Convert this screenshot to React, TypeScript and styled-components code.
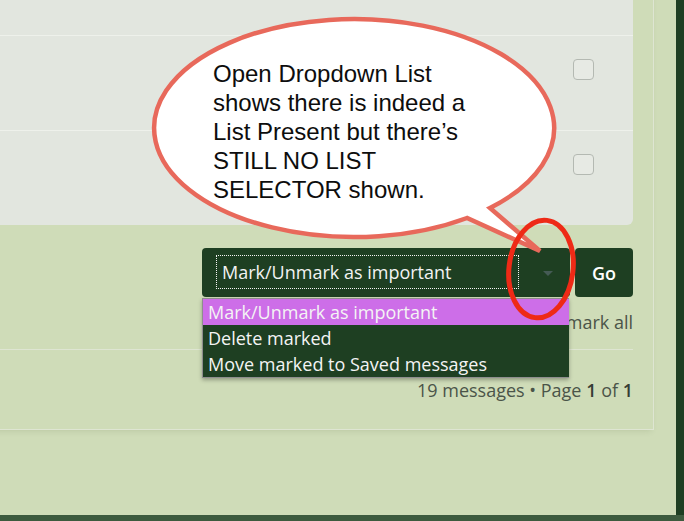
import React from 'react';
import styled, { createGlobalStyle } from 'styled-components';

const color = {
  page: '#cfdcb8',
  strip: '#1e3e22',
  bottomStrip: '#3d5b3e',
  list: '#e2e6df',
  listLine: '#eef1eb',
  panelLine: '#dee5d2',
  dark: '#1e3f22',
  purple: '#cd6ee8',
  text: '#4b5449',
  strong: '#363d35',
  coral: '#e8695b',
  red: '#ee2a16',
};

const actions = ['Mark/Unmark as important', 'Delete marked', 'Move marked to Saved messages'];

const App = () => {
  return (
    <Page>
      <GlobalStyle />
      <Main>
        <Panel>
          <ListBox>
            <Row />
            <Row>
              <Checkbox />
            </Row>
            <Row>
              <Checkbox />
            </Row>
          </ListBox>

          <ActionRow>
            <SelectBox>
              <FocusRing>{actions[0]}</FocusRing>
              <Caret />
              <Dropdown>
                {actions.map((action, index) => (
                  <Option key={action} $active={index === 0}>
                    {action}
                  </Option>
                ))}
              </Dropdown>
            </SelectBox>
            <GoButton>Go</GoButton>
          </ActionRow>

          <MarkRow>Mark all • Unmark all</MarkRow>
          <Divider />
          <Pagination>
            19 messages • Page <strong>1</strong> of <strong>1</strong>
          </Pagination>
        </Panel>
      </Main>
      <SideStrip />
      <BottomStrip />

      <Annotation viewBox="0 0 684 521">
        <path
          d="M490 208 A200 109 0 1 0 467 218 L540 251 Z"
          fill="#ffffff"
          stroke={color.coral}
          strokeWidth="4.5"
        />
        <ellipse
          cx="541"
          cy="269"
          rx="32"
          ry="49"
          transform="rotate(7 541 269)"
          fill="none"
          stroke={color.red}
          strokeWidth="5"
        />
      </Annotation>
      <BubbleText>
        Open Dropdown List
        <br />
        shows there is indeed a
        <br />
        List Present but there’s
        <br />
        STILL NO LIST
        <br />
        SELECTOR shown.
      </BubbleText>
    </Page>
  );
};

export default App;

const GlobalStyle = createGlobalStyle`
  html, body {
    margin: 0;
    padding: 0;
  }

  body {
    background-color: ${color.page};
    font-family: 'Open Sans', 'Liberation Sans', sans-serif;
  }
`;

const Page = styled.div`
  position: relative;
  display: grid;
  grid-template-columns: 1fr 8px;
  grid-template-rows: 1fr 6px;

  width: 684px;
  height: 521px;
  overflow: hidden;

  background-color: ${color.page};
`;

const Main = styled.main`
  grid-column: 1;
  grid-row: 1;
  overflow: hidden;
`;

const SideStrip = styled.div`
  grid-column: 2;
  grid-row: 1;
  background-color: ${color.strip};
`;

const BottomStrip = styled.div`
  grid-column: 1 / 3;
  grid-row: 2;
  background-color: ${color.bottomStrip};
`;

// the panel starts left of the visible area, so its left side is cut off
const Panel = styled.section`
  box-sizing: border-box;
  width: 674px;
  margin-left: -20px;
  padding: 0 20px 26px 20px;

  border-right: 1px solid ${color.panelLine};
  border-bottom: 1px solid ${color.panelLine};
  box-shadow: 0 4px 6px -3px rgba(70, 90, 50, 0.15);
`;

const ListBox = styled.ul`
  list-style: none;
  margin: -60px 0 0 -20px;
  padding: 0;

  background-color: ${color.list};
  border-radius: 6px;
`;

const Row = styled.li`
  box-sizing: border-box;
  display: flex;
  justify-content: flex-end;
  align-items: flex-start;

  height: 95px;
  padding: 23px 39px 0 0;

  & + & {
    border-top: 1px solid ${color.listLine};
  }
`;

const Checkbox = styled.span`
  box-sizing: border-box;
  width: 21px;
  height: 21px;

  background-color: #e7eae4;
  border: 1px solid #b4b9b2;
  border-radius: 4px;
`;

const ActionRow = styled.div`
  display: flex;
  justify-content: flex-end;
  gap: 5px;

  margin-top: 23px;
`;

const SelectBox = styled.div`
  position: relative;
  box-sizing: border-box;
  display: flex;
  align-items: center;

  width: 368px;
  height: 49px;
  padding: 0 0 1px 14px;

  background-color: ${color.dark};
  border-radius: 4px;
`;

const FocusRing = styled.span`
  box-sizing: border-box;
  width: 303px;
  height: 34px;
  padding-left: 5px;

  border: 1px dotted #f4f4f4;

  color: #f3f3f3;
  font-size: 18px;
  line-height: 32px;
  white-space: nowrap;
`;

const Caret = styled.span`
  width: 0;
  height: 0;
  margin: 2px 0 0 24px;

  border-left: 5px solid transparent;
  border-right: 5px solid transparent;
  border-top: 5px solid #455b55;
`;

const Dropdown = styled.ul`
  position: absolute;
  top: 50px;
  left: 0;
  z-index: 2;

  box-sizing: border-box;
  width: 367px;
  margin: 0;
  padding: 0;
  list-style: none;

  background-color: ${color.dark};
  border: 1px solid #8e8e8e;
  border-right: none;
  box-shadow: 0 2px 4px rgba(0, 0, 0, 0.3);
`;

const Option = styled.li<{ $active: boolean }>`
  height: 26px;
  padding-left: 5px;

  background-color: ${({ $active }) => ($active ? color.purple : 'transparent')};
  color: #f4f4f4;
  font-size: 18px;
  line-height: 26px;
  white-space: nowrap;
`;

const GoButton = styled.button`
  width: 58px;
  height: 49px;
  padding: 0;

  background-color: ${color.dark};
  border: none;
  border-radius: 4px;

  color: #ffffff;
  font-family: 'Open Sans', 'Liberation Sans', sans-serif;
  font-size: 18px;
  font-weight: 600;
`;

const MarkRow = styled.div`
  margin-top: 12px;

  color: ${color.text};
  font-size: 18px;
  line-height: 26px;
  text-align: right;
`;

const Divider = styled.hr`
  height: 1px;
  margin: 14px 0 0 -20px;

  background-color: ${color.panelLine};
  border: none;
`;

const Pagination = styled.div`
  margin-top: 27px;

  color: ${color.text};
  font-size: 18px;
  line-height: 26px;
  text-align: right;

  strong {
    color: ${color.strong};
    font-weight: 600;
  }
`;

const Annotation = styled.svg`
  position: absolute;
  top: 0;
  left: 0;
  z-index: 3;

  width: 684px;
  height: 521px;

  pointer-events: none;
`;

const BubbleText = styled.p`
  position: absolute;
  top: 59px;
  left: 213px;
  z-index: 4;

  margin: 0;

  color: #0d0d0d;
  font-family: 'Liberation Sans', Arial, sans-serif;
  font-size: 24px;
  line-height: 29px;
  white-space: nowrap;
`;
